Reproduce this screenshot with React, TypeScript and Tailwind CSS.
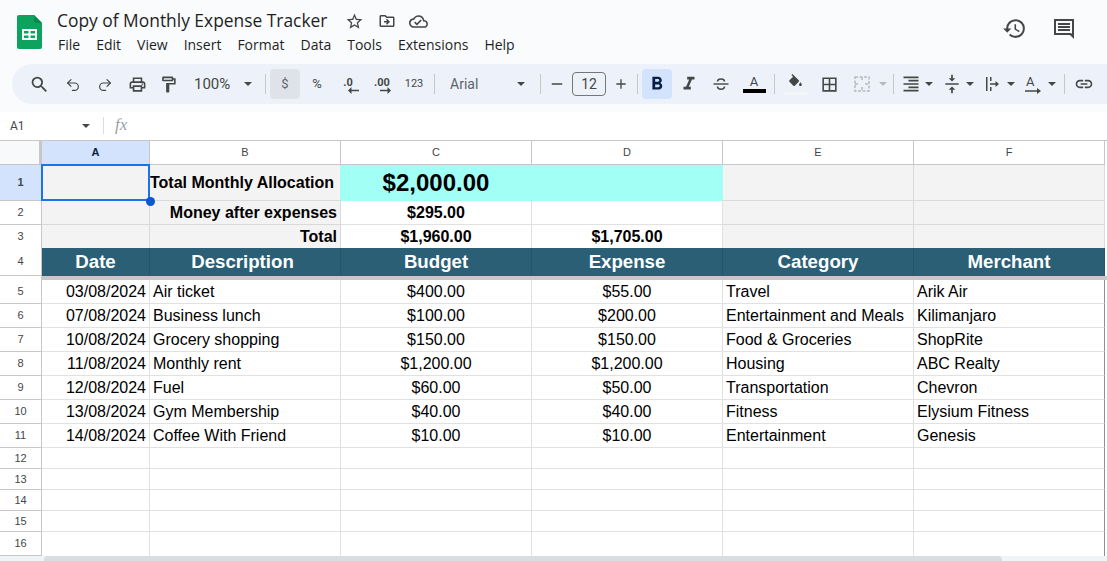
import type { ReactNode } from 'react';
import { Redo2, Undo2 } from 'lucide-react';
import {
  MdAdd,
  MdBorderAll,
  MdFormatAlignRight,
  MdFormatBold,
  MdFormatItalic,
  MdHistory,
  MdLink,
  MdOutlineCloudDone,
  MdOutlineDriveFileMove,
  MdOutlineFormatPaint,
  MdOutlineLocalPrintshop,
  MdOutlineStarBorder,
  MdRemove,
  MdSearch,
  MdVerticalAlignCenter,
} from 'react-icons/md';

const menus = ['File', 'Edit', 'View', 'Insert', 'Format', 'Data', 'Tools', 'Extensions', 'Help'];
const columns = ['A', 'B', 'C', 'D', 'E', 'F'];
const widths = ['w-[108px]', 'w-[191px]', 'w-[191px]', 'w-[191px]', 'w-[191px]', 'w-[191px]'];

const expenses = [
  ['03/08/2024', 'Air ticket', '$400.00', '$55.00', 'Travel', 'Arik Air'],
  ['07/08/2024', 'Business lunch', '$100.00', '$200.00', 'Entertainment and Meals', 'Kilimanjaro'],
  ['10/08/2024', 'Grocery shopping', '$150.00', '$150.00', 'Food & Groceries', 'ShopRite'],
  ['11/08/2024', 'Monthly rent', '$1,200.00', '$1,200.00', 'Housing', 'ABC Realty'],
  ['12/08/2024', 'Fuel', '$60.00', '$50.00', 'Transportation', 'Chevron'],
  ['13/08/2024', 'Gym Membership', '$40.00', '$40.00', 'Fitness', 'Elysium Fitness'],
  ['14/08/2024', 'Coffee With Friend', '$10.00', '$10.00', 'Entertainment', 'Genesis'],
];

function Sep({ className }: { className: string }) {
  return <div className={`h-5 w-px shrink-0 bg-[#c7c7c7] ${className}`} />;
}

function Tool({ className, children }: { className: string; children: ReactNode }) {
  return <div className={`flex h-6 w-6 shrink-0 items-center justify-center text-[#444746] ${className}`}>{children}</div>;
}

function Caret({ className = '' }: { className?: string }) {
  return <div className={`h-0 w-0 shrink-0 border-x-[4px] border-t-[4px] border-x-transparent border-t-[#444746] ${className}`} />;
}

function SheetsLogo() {
  return (
    <svg width="25" height="34" viewBox="0 0 25 34" className="shrink-0">
      <path d="M2 0h15l8 8v24a2 2 0 0 1-2 2H2a2 2 0 0 1-2-2V2a2 2 0 0 1 2-2z" fill="#0da35e" />
      <path d="M17 0l8 8h-6a2 2 0 0 1-2-2z" fill="#078a4c" />
      <path d="M5 14h15v11H5z" fill="#fff" />
      <path d="M7 16h4.500v2.500H7zM13.500 16H18v2.500h-4.500zM7 20.500h4.500V23H7zM13.500 20.500H18V23h-4.500z" fill="#0da35e" />
    </svg>
  );
}

function Header() {
  return (
    <div className="flex h-16 shrink-0 pl-[17px] pt-[15px]">
      <SheetsLogo />
      <div className="ml-[15px] -mt-[9px] w-[900px]">
        <div className="flex h-[30px] items-center text-[#1f1f1f]">
          <span className="w-[270px] whitespace-nowrap font-['Open_Sans',sans-serif] text-[17.4px] leading-none">Copy of Monthly Expense Tracker</span>
          <MdOutlineStarBorder className="ml-[18px] text-[#444746]" size={19} />
          <MdOutlineDriveFileMove className="ml-[14px] text-[#444746]" size={18} />
          <MdOutlineCloudDone className="ml-[13px] text-[#444746]" size={19} />
        </div>
        <div className="-mt-[1px] flex gap-[16px] pl-[1px] font-['Open_Sans',sans-serif] text-sm leading-5 text-[#1f1f1f]">
          {menus.map((m) => (
            <span key={m}>{m}</span>
          ))}
        </div>
      </div>
      <MdHistory className="mt-[1px] ml-[45px] text-[#444746]" size={25} />
      <svg width="24" height="24" viewBox="0 0 24 24" className="mt-[2px] ml-[25px] text-[#444746]">
        <path fill="currentColor" fillRule="evenodd" d="M2 2h20v20l-4-4H2zM4 4v12h15l1 1V4z" />
        <path fill="currentColor" d="M6 6h12v2H6zM6 9h12v2H6zM6 12h12v2H6z" />
      </svg>
    </div>
  );
}

function Toolbar() {
  return (
    <div className="ml-3 flex h-10 shrink-0 items-center rounded-l-[20px] bg-[#edf2fa] pl-[15px] font-['Roboto',sans-serif]">
      <Tool className=""><MdSearch size={21} /></Tool>
      <Tool className="ml-[10px]"><Undo2 size={16} strokeWidth={1.75} className="mt-[2px]" /></Tool>
      <Tool className="ml-[8px]"><Redo2 size={16} strokeWidth={1.75} className="mt-[2px]" /></Tool>
      <Tool className="ml-[8px]"><MdOutlineLocalPrintshop size={19} /></Tool>
      <Tool className="ml-[7px]"><MdOutlineFormatPaint size={19} /></Tool>
      <div className="ml-[14px] flex w-[63px] shrink-0 items-center justify-between text-[15px] text-[#444746]">
        <span>100%</span>
        <Caret className="mr-[5px]" />
      </div>
      <Sep className="ml-[8px]" />
      <div className="ml-[4px] flex h-[30px] w-[30px] shrink-0 items-center justify-center rounded bg-[#dfe3e9] text-[13px] text-[#5f6368]">$</div>
      <Tool className="ml-[5px] text-[13px]">%</Tool>
      <Tool className="ml-[7px]">
        <div className="relative -mt-[4px] text-[11px] font-bold leading-none">
          .0
          <svg width="11" height="7" viewBox="0 0 11 7" className="absolute -bottom-[6px] left-[5px]">
            <path d="M0 3.500L3.500 0v2.800H11v1.400H3.500V7z" fill="#444746" />
          </svg>
        </div>
      </Tool>
      <Tool className="ml-[10px]">
        <div className="relative -mt-[4px] text-[11px] font-bold leading-none">
          .00
          <svg width="11" height="7" viewBox="0 0 11 7" className="absolute -bottom-[6px] left-[6px]">
            <path d="M11 3.500L7.500 0v2.800H0v1.400h7.500V7z" fill="#444746" />
          </svg>
        </div>
      </Tool>
      <Tool className="ml-[8px] text-[11px]">123</Tool>
      <Sep className="ml-[8px]" />
      <div className="ml-[15px] flex w-[80px] shrink-0 items-center justify-between text-sm text-[#5f6368]">
        <span>Arial</span>
        <Caret className="mr-[5px]" />
      </div>
      <Sep className="ml-[10px]" />
      <Tool className="ml-[6px] !w-5"><MdRemove size={18} /></Tool>
      <div className="ml-[5px] flex h-6 w-[34px] shrink-0 items-center justify-center rounded border border-[#747775] text-sm text-[#444746]">12</div>
      <Tool className="ml-[7px] !w-4"><MdAdd size={20} /></Tool>
      <Sep className="ml-[8px]" />
      <div className="ml-[4px] flex h-[30px] w-[30px] shrink-0 items-center justify-center rounded bg-[#d3e3fd] text-[#041e49]">
        <MdFormatBold size={22} />
      </div>
      <Tool className="ml-[5px]"><MdFormatItalic size={22} /></Tool>
      <Tool className="ml-[8px]">
        <svg width="20" height="20" viewBox="0 0 20 20">
          <path d="M2.500 9.300h15v1.400h-15z" fill="currentColor" />
          <path d="M6.500 7.500c0-3.500 7-3.500 7 0M6.500 12.500c0 3.500 7 3.500 7 0" fill="none" stroke="currentColor" strokeWidth="1.500" />
        </svg>
      </Tool>
      <Tool className="ml-[9px]">
        <div className="flex flex-col items-center text-[13px] leading-none">
          <span>A</span>
          <div className="mt-[1px] h-1 w-[23px] bg-black" />
        </div>
      </Tool>
      <Sep className="ml-[8px]" />
      <Tool className="ml-[8px]">
        <div className="flex flex-col items-center">
          <svg width="17" height="17" viewBox="0 0 24 24">
            <path
              fill="currentColor"
              d="M16.560 8.940L7.620 0 6.210 1.410l2.380 2.380-5.150 5.150c-.59.59-.59 1.540 0 2.120l5.500 5.500c.29.29.68.44 1.060.44s.77-.15 1.060-.44l5.500-5.500c.59-.58.59-1.530 0-2.120zM19 11.500s-2 2.170-2 3.500c0 1.100.9 2 2 2s2-.9 2-2c0-1.330-2-3.500-2-3.500z"
            />
          </svg>
          <div className="mt-[1px] h-[3px] w-[23px] bg-[#f4f6fa]" />
        </div>
      </Tool>
      <Tool className="ml-[10px]"><MdBorderAll size={19} /></Tool>
      <div className="ml-[11px] flex w-[35px] shrink-0 items-center justify-between text-[#b6b9bd]">
        <svg width="20" height="20" viewBox="0 0 20 20">
          <path
            fill="none"
            stroke="currentColor"
            strokeWidth="1.500"
            strokeDasharray="3 1.500"
            d="M3 3h14v14H3zM10 3v4M10 13v4M3 10h4M13 10h4"
          />
        </svg>
        <Caret className="!border-t-[#b6b9bd]" />
      </div>
      <Sep className="ml-[6px]" />
      <div className="ml-[7px] flex w-[32px] shrink-0 items-center justify-between text-[#444746]">
        <MdFormatAlignRight size={20} />
        <Caret />
      </div>
      <div className="ml-[9px] flex w-[32px] shrink-0 items-center justify-between text-[#444746]">
        <MdVerticalAlignCenter size={20} />
        <Caret />
      </div>
      <div className="ml-[9px] flex w-[32px] shrink-0 items-center justify-between text-[#444746]">
        <svg width="20" height="20" viewBox="0 0 20 20">
          <path fill="currentColor" d="M3 3h1.500v14H3zM7 3h1.500v4H7zM7 13h1.500v4H7zM7 9.200h5.500V7l3.500 3-3.500 3v-2.200H7z" />
        </svg>
        <Caret />
      </div>
      <div className="ml-[9px] flex w-[32px] shrink-0 items-center justify-between text-[#444746]">
        <div className="flex flex-col items-start text-[13px] leading-none">
          <span className="ml-[2px]">A</span>
          <svg width="18" height="6" viewBox="0 0 18 6">
            <path fill="currentColor" d="M1 2.300h12V0l4 3-4 3V3.700H1z" />
          </svg>
        </div>
        <Caret />
      </div>
      <Sep className="ml-[8px]" />
      <Tool className="ml-[7px]"><MdLink size={20} /></Tool>
    </div>
  );
}

function FormulaBar() {
  return (
    <div className="mt-2 flex h-7 shrink-0 items-center bg-white pb-[1px] font-['Roboto',sans-serif] text-xs text-[#444746]">
      <span className="ml-[10px] w-[72px]">A1</span>
      <Caret />
      <div className="ml-[13px] h-[17px] w-px bg-[#dadce0]" />
      <span className="ml-[11px] font-['Liberation_Serif',serif] text-[17px] italic text-[#9aa0a6]">fx</span>
    </div>
  );
}

function RowHead({ n, h, active = false }: { n: number; h: string; active?: boolean }) {
  return (
    <div
      className={`flex w-[42px] shrink-0 items-center justify-center border-r border-b border-[#c7c7c7] text-[11px] text-[#444746] ${h} ${active ? 'bg-[#d3e3fd] font-bold' : 'bg-white'}`}
    >
      {n}
    </div>
  );
}

function Cell({ className, children }: { className: string; children?: ReactNode }) {
  return (
    <div className={`flex shrink-0 items-center overflow-hidden border-r whitespace-nowrap ${className}`}>{children}</div>
  );
}

function SummaryRow({ n, h, label, budget, expense }: { n: number; h: string; label: string; budget: string; expense: string }) {
  return (
    <div className="flex">
      <RowHead n={n} h={h} />
      <Cell className={`${widths[0]} ${h} border-b border-[#d9d9d9] bg-[#f3f3f3]`} />
      <Cell className={`${widths[1]} ${h} justify-end border-b border-[#d9d9d9] bg-[#f3f3f3] pr-[3px] font-bold`}>{label}</Cell>
      <Cell className={`${widths[2]} ${h} justify-center border-b border-[#e1e1e1] font-bold`}>{budget}</Cell>
      <Cell className={`${widths[3]} ${h} justify-center border-b border-[#e1e1e1] font-bold`}>{expense}</Cell>
      <Cell className={`${widths[4]} ${h} border-b border-[#d9d9d9] bg-[#f3f3f3]`} />
      <Cell className={`${widths[5]} ${h} border-b border-[#d9d9d9] bg-[#f3f3f3]`} />
    </div>
  );
}

function Grid() {
  const headers = ['Date', 'Description', 'Budget', 'Expense', 'Category', 'Merchant'];
  return (
    <div className="relative w-[1107px] border-t border-[#c7c7c7] font-['Liberation_Sans',Arial,sans-serif] text-base leading-none text-black">
      {/* column letters */}
      <div className="flex h-6 text-[11px] text-[#444746]">
        <div className="w-[42px] shrink-0 border-r-[3px] border-b border-r-[#c7c7c7] border-b-[#c7c7c7] bg-[#f8f9fa]" />
        {columns.map((c, i) => (
          <div
            key={c}
            className={`flex shrink-0 items-center justify-center border-r border-b border-[#c7c7c7] ${widths[i]} ${i === 0 ? 'bg-[#d3e3fd] font-bold text-[#0b1f40]' : 'bg-white'}`}
          >
            {c}
          </div>
        ))}
      </div>

      {/* allocation row */}
      <div className="flex">
        <RowHead n={1} h="h-9" active />
        <Cell className={`${widths[0]} h-9 border-b border-[#d9d9d9] bg-[#f3f3f3]`} />
        <Cell className={`${widths[1]} h-9 border-b border-[#d9d9d9] border-r-[#a2fff6] bg-[#f3f3f3] font-bold`}>Total Monthly Allocation</Cell>
        <Cell className={`${widths[2]} h-9 justify-center border-b border-[#a2fff6] bg-[#a2fff6] text-2xl font-bold`}>$2,000.00</Cell>
        <Cell className={`${widths[3]} h-9 border-b border-[#a2fff6] bg-[#a2fff6]`} />
        <Cell className={`${widths[4]} h-9 border-b border-[#d9d9d9] bg-[#f3f3f3]`} />
        <Cell className={`${widths[5]} h-9 border-b border-[#d9d9d9] bg-[#f3f3f3]`} />
      </div>

      <SummaryRow n={2} h="h-6" label="Money after expenses" budget="$295.00" expense="" />
      <SummaryRow n={3} h="h-6" label="Total" budget="$1,960.00" expense="$1,705.00" />

      {/* table head */}
      <div className="relative -mt-[1px] flex">
        <RowHead n={4} h="h-7" />
        {headers.map((t, i) => (
          <Cell
            key={t}
            className={`${widths[i]} h-7 justify-center border-[#265669] bg-[#2a5f75] pt-[1px] text-[18.67px] font-bold text-white ${t === 'Description' ? 'pr-[5px]' : ''}`}
          >
            {t}
          </Cell>
        ))}
      </div>
      <div className="flex h-[4px]">
        <div className="w-[42px] border-r border-[#c7c7c7]" />
        <div className="w-[1065px] bg-[#c7c7c7]" />
      </div>

      {expenses.map((row, r) => (
        <div className="flex" key={row[0]}>
          <RowHead n={r + 5} h="h-6" />
          {row.map((v, i) => (
            <Cell
              key={i}
              className={`${widths[i]} h-6 border-b border-[#e1e1e1] ${i === 0 ? 'justify-end pr-[3px]' : i === 2 || i === 3 ? 'justify-center' : 'pl-[3px]'} ${i === 5 ? 'border-r-[#8f8f8f]' : ''}`}
            >
              {v}
            </Cell>
          ))}
        </div>
      ))}

      {[12, 13, 14, 15].map((n) => (
        <div className="flex" key={n}>
          <RowHead n={n} h="h-[21px]" />
          {widths.map((w, i) => (
            <Cell key={w + i} className={`${w} h-[21px] border-b border-[#e1e1e1] ${i === 5 ? 'border-r-[#8f8f8f]' : ''}`} />
          ))}
        </div>
      ))}
      <div className="flex">
        <RowHead n={16} h="h-6" />
        {widths.map((w, i) => (
          <Cell key={w + i} className={`${w} h-6 border-[#e1e1e1] ${i === 5 ? 'border-r-[#8f8f8f]' : ''}`} />
        ))}
      </div>

      {/* selection on A1 */}
      <div className="absolute top-[23px] left-[41px] h-[37px] w-[109px] border-2 border-[#1a73e8]" />
      <div className="absolute top-[56px] left-[146px] h-[9px] w-[9px] rounded-full bg-[#0b57d0]" />
    </div>
  );
}

export default function App() {
  return (
    <div className="flex h-screen w-full flex-col overflow-hidden bg-[#f9fbfd]">
      <Header />
      <Toolbar />
      <FormulaBar />
      <div className="flex-1 overflow-hidden bg-white">
        <Grid />
      </div>
      <div className="h-[5px] shrink-0 bg-[#f1f3f4] pl-[44px]">
        <div className="h-[5px] w-[958px] rounded-t bg-[#dadce0]" />
      </div>
    </div>
  );
}
